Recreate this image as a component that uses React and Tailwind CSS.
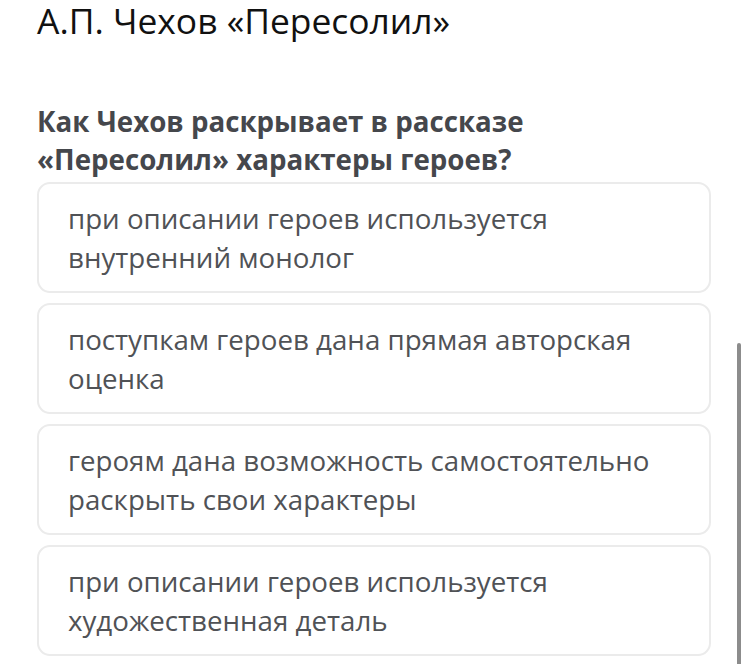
const options = [
  ['при описании героев используется', 'внутренний монолог'],
  ['поступкам героев дана прямая авторская', 'оценка'],
  ['героям дана возможность самостоятельно', 'раскрыть свои характеры'],
  ['при описании героев используется', 'художественная деталь'],
];

export default function App() {
  return (
    <div className="relative h-[664px] w-[748px] overflow-hidden bg-white font-['Open_Sans',sans-serif]">
      <div className="pl-[37px] pr-[37px]">
        <h1 className="text-[35.4px] leading-[40px] text-[#111]">А.П. Чехов «Пересолил»</h1>
        <h2 className="mt-[62px] text-[27.7px] font-bold leading-[38px] text-[#45474c]">
          Как Чехов раскрывает в рассказе
          <br />
          «Пересолил» характеры героев?
        </h2>
        <div className="mt-[4px] flex flex-col gap-[10px]">
          {options.map((lines, i) => (
            <div
              key={i}
              className="flex h-[111px] flex-col justify-center rounded-[13px] border-2 border-[#ebebeb] px-[29px] text-[27.7px] leading-[39px] text-[#505256]"
            >
              <span>{lines[0]}</span>
              <span>{lines[1]}</span>
            </div>
          ))}
        </div>
      </div>
      <div className="absolute right-[7px] top-[343px] h-[330px] w-[4px] rounded-full bg-[#8c8c8c]" />
    </div>
  );
}
